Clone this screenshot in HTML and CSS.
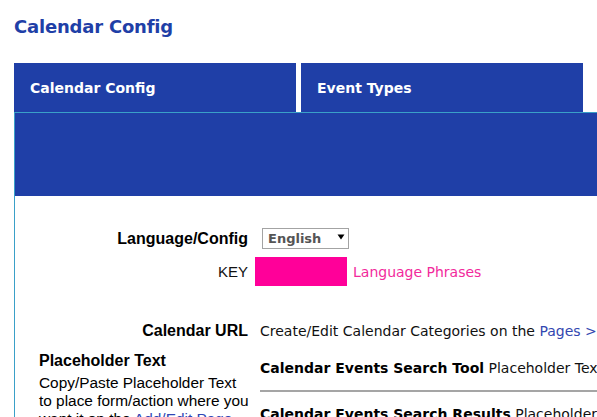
FILE: index.html
```html
<!DOCTYPE html>
<html>
<head>
<meta charset="utf-8">
<title>Calendar Config</title>
<link rel="stylesheet" href="styles.css">
</head>
<body>
<div class="page">
  <h1 class="title">Calendar Config</h1>
  <div class="tabs">
    <div class="tab">Calendar Config</div>
    <div class="tab">Event Types</div>
  </div>
  <div class="panel">
    <div class="panel-head"></div>
    <div class="panel-body">
      <div class="row row-lang">
        <div class="label">Language/Config</div>
        <div class="select-wrap">
          <select class="select"><option>English</option></select>
          <svg class="select-arrow" width="8" height="6" viewBox="0 0 8 6"><path d="M0.5 0.5 L7.5 0.5 L4 5.5 Z" fill="#000"/></svg>
        </div>
      </div>
      <div class="row row-key">
        <div class="label label-plain">KEY</div>
        <div class="swatch"></div>
        <a class="phrases">Language Phrases</a>
      </div>
      <div class="row row-url">
        <div class="label">Calendar URL</div>
        <div class="value">Create/Edit Calendar Categories on the <a class="link">Pages &gt; Calendar</a></div>
      </div>
      <div class="row row-ph">
        <div class="ph-left">
          <div class="ph-title">Placeholder Text</div>
          <div class="ph-desc">Copy/Paste Placeholder Text to place form/action where you want it on the <a class="link2">Add/Edit Page</a> screen.</div>
        </div>
        <div class="ph-right">
          <div class="ph-item"><b>Calendar Events Search Tool</b> Placeholder Text: [calendar_search_tool]</div>
          <div class="ph-item"><b>Calendar Events Search Results</b> Placeholder Text: [calendar_search_results]</div>
        </div>
      </div>
    </div>
  </div>
</div>
</body>
</html>
```
FILE: styles.css
```css
html, body {
  margin: 0;
  padding: 0;
  background: #fff;
  overflow: hidden;
}
.page {
  padding-left: 14px;
  width: 900px;
}
.title {
  margin: 16px 0 25px 0;
  font-family: "DejaVu Sans", Verdana, sans-serif;
  font-weight: bold;
  font-size: 18px;
  line-height: 22px;
  letter-spacing: -0.2px;
  color: #1f3fa7;
}
.tabs {
  display: flex;
  gap: 5px;
}
.tab {
  width: 266px;
  height: 49px;
  padding-left: 16px;
  display: flex;
  align-items: center;
  background: #1f3fa7;
  color: #fff;
  font-family: "DejaVu Sans", Verdana, sans-serif;
  font-weight: bold;
  font-size: 14px;
}
.panel {
  border-top: 1px solid #3aa0c8;
  border-left: 1px solid #3aa0c8;
  height: 400px;
}
.panel-head {
  height: 83px;
  background: #1f3fa7;
}
.panel-body {
  padding-left: 24px;
  padding-top: 32px;
}
.row {
  display: flex;
}
.label {
  width: 209px;
  flex: none;
  text-align: right;
  font-family: "Liberation Sans", Arial, sans-serif;
  font-weight: bold;
  font-size: 16px;
  line-height: 18px;
  color: #000;
}
.label-plain {
  font-weight: normal;
  font-size: 15px;
  color: #111;
}
.row-lang {
  align-items: center;
  height: 21px;
}
.select-wrap {
  position: relative;
  margin-left: 14px;
  width: 87px;
  height: 21px;
}
.select {
  appearance: none;
  -webkit-appearance: none;
  box-sizing: border-box;
  width: 87px;
  height: 21px;
  margin: 0;
  padding: 0 0 0 5px;
  border: 1px solid #a3a3a3;
  border-radius: 0;
  background: #fff;
  font-family: "DejaVu Sans", Verdana, sans-serif;
  font-weight: bold;
  font-size: 13px;
  color: #555;
}
.select-arrow {
  position: absolute;
  left: 75px;
  top: 6px;
}
.row-key {
  margin-top: 8px;
  align-items: center;
}
.swatch {
  margin-left: 7px;
  width: 92px;
  height: 29px;
  background: #ff0099;
}
.phrases {
  margin-left: 6px;
  font-family: "DejaVu Sans", Verdana, sans-serif;
  font-size: 14px;
  color: #f22a9c;
}
.row-url {
  margin-top: 36px;
  align-items: baseline;
}
.value {
  margin-left: 12px;
  white-space: nowrap;
  font-family: "DejaVu Sans", Verdana, sans-serif;
  font-size: 14px;
  line-height: 18px;
  color: #111;
}
.link {
  color: #3247b0;
}
.row-ph {
  margin-top: 12px;
}
.ph-left {
  width: 211px;
  flex: none;
  font-family: "Liberation Sans", Arial, sans-serif;
  color: #000;
}
.ph-title {
  font-weight: bold;
  font-size: 16px;
  line-height: 18px;
  margin-bottom: 4px;
}
.ph-desc {
  font-size: 15.4px;
  line-height: 18px;
}
.link2 {
  color: #2f47b5;
}
.ph-right {
  margin-left: 10px;
  flex: 1;
}
.ph-item {
  white-space: nowrap;
  font-family: "DejaVu Sans", Verdana, sans-serif;
  font-size: 14px;
  line-height: 18px;
  color: #111;
  padding: 7px 0 13px 0;
  border-bottom: 2px solid #a5a5a5;
}
.ph-item + .ph-item {
  padding-top: 13px;
}
.ph-item b {
  color: #000;
}
```
